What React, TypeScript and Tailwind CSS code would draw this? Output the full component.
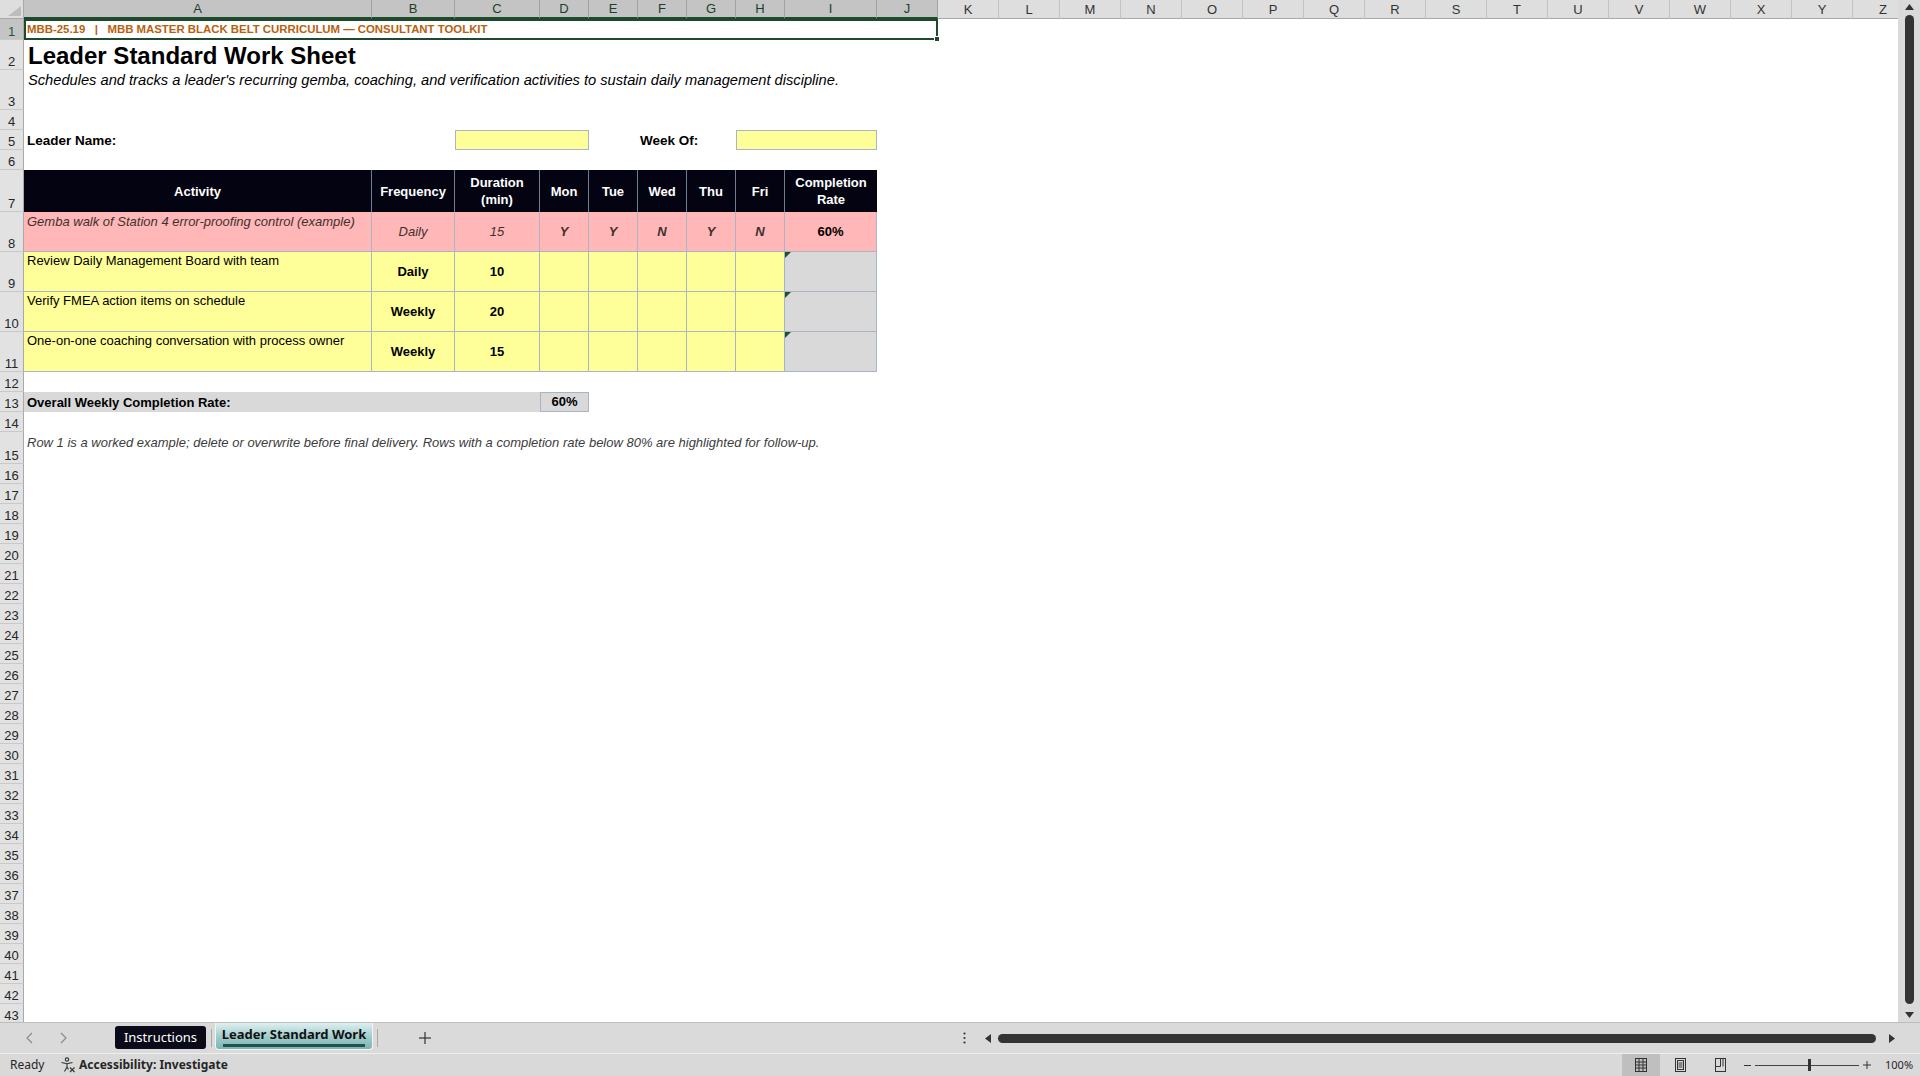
import React from 'react';

type Col = { l: string; w: string; sel: boolean };
const COLS: Col[] = [
  { l: 'A', w: 'w-[348px]', sel: true },
  { l: 'B', w: 'w-[83px]', sel: true },
  { l: 'C', w: 'w-[85px]', sel: true },
  { l: 'D', w: 'w-[49px]', sel: true },
  { l: 'E', w: 'w-[49px]', sel: true },
  { l: 'F', w: 'w-[49px]', sel: true },
  { l: 'G', w: 'w-[49px]', sel: true },
  { l: 'H', w: 'w-[49px]', sel: true },
  { l: 'I', w: 'w-[92px]', sel: true },
  { l: 'J', w: 'w-[61px]', sel: true },
  ...'KLMNOPQRSTUVWXYZ'.split('').map((l) => ({ l, w: 'w-[61px]', sel: false })),
];

function ColumnHeader() {
  return (
    <div className="flex h-[19px] shrink-0">
      <div className="relative w-[24px] shrink-0 bg-[#dedede] border-r border-b border-[#a9a9a9]">
        <svg className="absolute right-[1px] bottom-[2px]" width="14" height="10" viewBox="0 0 14 10">
          <polygon points="13,0 13,10 0,10" fill="#bdbdbd" />
        </svg>
      </div>
      {COLS.map((c) => (
        <div
          key={c.l}
          className={`${c.w} shrink-0 flex items-center justify-center border-r text-[13px] leading-none ${
            c.sel
              ? 'bg-[#c4c4c4] text-[#1b3f2a] border-[#a3a3a3] border-b-2 border-b-[#1d4a2c]'
              : 'bg-[#dedede] text-[#333333] border-[#c2c2c2] border-b border-b-[#a9a9a9]'
          }`}
        >
          {c.l}
        </div>
      ))}
    </div>
  );
}

function RH({ n, sel }: { n: number; sel?: boolean }) {
  return (
    <div
      className={`w-[24px] shrink-0 self-stretch flex items-end justify-center border-r border-r-[#a9a9a9] border-b border-b-[#c9c9c9] text-[13px] leading-[14px] ${
        sel ? 'bg-[#c4c4c4] text-[#1b5a34]' : 'bg-[#e2e2e2] text-[#262626]'
      }`}
    >
      {n}
    </div>
  );
}

const TB = 'border-r border-b border-[#a9b5c4]';

function HeadCell({ w, children, last }: { w: string; children: React.ReactNode; last?: boolean }) {
  return (
    <div
      className={`${w} shrink-0 flex items-center justify-center text-center text-white font-bold text-[13px] leading-[17px] ${
        last ? '' : 'border-r border-[#6f7d8c]'
      }`}
    >
      {children}
    </div>
  );
}

function Triangle() {
  return <div className="absolute top-0 left-0 w-0 h-0 border-t-[6px] border-r-[6px] border-t-[#1e5128] border-r-transparent" />;
}

function DataRow({ act, freq, dur }: { act: string; freq: string; dur: string }) {
  return (
    <div className="flex w-fit h-full bg-[#ffff99] text-[13px] text-black">
      <div className={`w-[348px] shrink-0 ${TB} pl-[3px] pt-[1px] leading-[16px] whitespace-nowrap`}>{act}</div>
      <div className={`w-[83px] shrink-0 ${TB} flex items-center justify-center font-bold`}>{freq}</div>
      <div className={`w-[85px] shrink-0 ${TB} flex items-center justify-center font-bold`}>{dur}</div>
      <div className={`w-[49px] shrink-0 ${TB}`} />
      <div className={`w-[49px] shrink-0 ${TB}`} />
      <div className={`w-[49px] shrink-0 ${TB}`} />
      <div className={`w-[49px] shrink-0 ${TB}`} />
      <div className={`w-[49px] shrink-0 ${TB}`} />
      <div className={`relative w-[92px] shrink-0 ${TB} bg-[#d9d9d9]`}>
        <Triangle />
      </div>
    </div>
  );
}

function ExampleRow() {
  const day = 'w-[49px] shrink-0 flex items-center justify-center font-bold italic';
  return (
    <div className="flex w-fit h-full bg-[#ffb7b7] text-[13px] text-[#3f3030] italic">
      <div className={`w-[348px] shrink-0 ${TB} pl-[3px] pt-[2px] leading-[16px] whitespace-nowrap`}>
        Gemba walk of Station 4 error-proofing control (example)
      </div>
      <div className={`w-[83px] shrink-0 ${TB} flex items-center justify-center`}>Daily</div>
      <div className={`w-[85px] shrink-0 ${TB} flex items-center justify-center`}>15</div>
      <div className={`${day} ${TB}`}>Y</div>
      <div className={`${day} ${TB}`}>Y</div>
      <div className={`${day} ${TB}`}>N</div>
      <div className={`${day} ${TB}`}>Y</div>
      <div className={`${day} ${TB}`}>N</div>
      <div className={`w-[92px] shrink-0 ${TB} flex items-center justify-center font-bold not-italic text-black`}>60%</div>
    </div>
  );
}

function rowContent(n: number): React.ReactNode {
  switch (n) {
    case 1:
      return (
        <div className="relative w-[914px] h-full border-2 border-[#1d4a2c] flex items-center pl-[1px]">
          <span className="whitespace-pre text-[11.4px] font-bold text-[#b5620e] leading-none">
            {'MBB-25.19   |   MBB MASTER BLACK BELT CURRICULUM — CONSULTANT TOOLKIT'}
          </span>
          <div className="absolute -right-[4px] -bottom-[4px] w-[6px] h-[6px] bg-[#1d4a2c] border border-white" />
        </div>
      );
    case 2:
      return (
        <div className="h-full flex items-end pl-[4px] text-[24px] font-bold leading-[28px] whitespace-nowrap text-black">
          Leader Standard Work Sheet
        </div>
      );
    case 3:
      return (
        <div className="h-full pl-[4px] pt-[2px] italic text-[14.67px] leading-[17px] whitespace-nowrap text-black">
          Schedules and tracks a leader's recurring gemba, coaching, and verification activities to sustain daily management discipline.
        </div>
      );
    case 5:
      return (
        <div className="flex h-full text-[13.5px] font-bold leading-[16px]">
          <div className="w-[348px] shrink-0 flex items-end pl-[3px] pb-[1px]">Leader Name:</div>
          <div className="w-[83px] shrink-0" />
          <div className="w-[134px] shrink-0 bg-[#ffff99] border border-[#a7b6c6]" />
          <div className="w-[49px] shrink-0" />
          <div className="w-[49px] shrink-0 flex items-end pl-[2px] pb-[1px] whitespace-nowrap">Week Of:</div>
          <div className="w-[49px] shrink-0" />
          <div className="w-[141px] shrink-0 bg-[#ffff99] border border-[#a7b6c6]" />
        </div>
      );
    case 7:
      return (
        <div className="flex w-fit h-full bg-[#030312]">
          <HeadCell w="w-[348px]">Activity</HeadCell>
          <HeadCell w="w-[83px]">Frequency</HeadCell>
          <HeadCell w="w-[85px]">
            <span>
              Duration
              <br />
              (min)
            </span>
          </HeadCell>
          <HeadCell w="w-[49px]">Mon</HeadCell>
          <HeadCell w="w-[49px]">Tue</HeadCell>
          <HeadCell w="w-[49px]">Wed</HeadCell>
          <HeadCell w="w-[49px]">Thu</HeadCell>
          <HeadCell w="w-[49px]">Fri</HeadCell>
          <HeadCell w="w-[92px]" last>
            <span>
              Completion
              <br />
              Rate
            </span>
          </HeadCell>
        </div>
      );
    case 8:
      return <ExampleRow />;
    case 9:
      return <DataRow act="Review Daily Management Board with team" freq="Daily" dur="10" />;
    case 10:
      return <DataRow act="Verify FMEA action items on schedule" freq="Weekly" dur="20" />;
    case 11:
      return <DataRow act="One-on-one coaching conversation with process owner" freq="Weekly" dur="15" />;
    case 13:
      return (
        <div className="flex h-full text-[13px] font-bold leading-[16px]">
          <div className="w-[516px] shrink-0 bg-[#d9d9d9] flex items-end pl-[3px] pb-[1px]">Overall Weekly Completion Rate:</div>
          <div className="w-[49px] shrink-0 bg-[#d9d9d9] border border-[#a9b5c4] flex items-center justify-center">60%</div>
        </div>
      );
    case 15:
      return (
        <div className="h-full pl-[3px] pt-[3px] italic text-[13px] leading-[16px] whitespace-nowrap text-[#3c3c3c]">
          Row 1 is a worked example; delete or overwrite before final delivery. Rows with a completion rate below 80% are highlighted for follow-up.
        </div>
      );
    default:
      return null;
  }
}

const ROWS: { n: number; h: string }[] = [
  { n: 1, h: 'h-[21px]' },
  { n: 2, h: 'h-[30px]' },
  { n: 3, h: 'h-[40px]' },
  { n: 4, h: 'h-[20px]' },
  { n: 5, h: 'h-[20px]' },
  { n: 6, h: 'h-[20px]' },
  { n: 7, h: 'h-[42px]' },
  { n: 8, h: 'h-[40px]' },
  { n: 9, h: 'h-[40px]' },
  { n: 10, h: 'h-[40px]' },
  { n: 11, h: 'h-[40px]' },
  { n: 12, h: 'h-[20px]' },
  { n: 13, h: 'h-[20px]' },
  { n: 14, h: 'h-[20px]' },
  { n: 15, h: 'h-[32px]' },
  ...Array.from({ length: 28 }, (_, i) => ({ n: 16 + i, h: 'h-[20px]' })),
];

function VScroll() {
  return (
    <div className="w-[22px] h-full shrink-0 bg-[#dadada] flex flex-col items-center pt-[4px] pb-[4px]">
      <svg width="9" height="6" viewBox="0 0 9 6">
        <polygon points="4.5,0 9,6 0,6" fill="#333" />
      </svg>
      <div className="mt-[5px] w-[9px] flex-1 rounded-full bg-[#333333]" />
      <svg className="mt-[8px]" width="9" height="6" viewBox="0 0 9 6">
        <polygon points="0,0 9,0 4.5,6" fill="#333" />
      </svg>
    </div>
  );
}

function TabBar() {
  return (
    <div className="h-[31px] shrink-0 flex bg-[#dadada] border-t border-[#bdbdbd] font-['Noto_Sans','Open_Sans',sans-serif]">
      <div className="w-[950px] shrink-0 flex">
        <div className="w-[112px] shrink-0 flex items-center pl-[23px] gap-[19px] text-[#8a8a8a]">
          <svg width="14" height="14" viewBox="0 0 14 14">
            <polyline points="9,2 4,7 9,12" fill="none" stroke="#8a8a8a" strokeWidth="1.2" />
          </svg>
          <svg width="14" height="14" viewBox="0 0 14 14">
            <polyline points="5,2 10,7 5,12" fill="none" stroke="#8a8a8a" strokeWidth="1.2" />
          </svg>
        </div>
        <div className="ml-[3px] mt-[3px] w-[91px] h-[23px] rounded-[3px] bg-[#0a0a18] text-white text-[13px] flex items-center justify-center">
          Instructions
        </div>
        <div className="ml-[5px] mt-[6px] w-px h-[18px] bg-[#a8a8a8]" />
        <div className="ml-[3px] w-[158px] h-[27px] rounded-b-[4px] border border-t-0 border-[#f4f4f4] bg-gradient-to-b from-[#dff0f0] via-[#a3cdcd] to-[#7db3b2] flex flex-col items-center justify-center">
          <span className="text-[13px] font-bold text-[#111] leading-[16px]">Leader Standard Work</span>
          <span className="mt-[2px] w-[142px] h-[3px] bg-[#1f5448]" />
        </div>
        <div className="ml-[4px] mt-[6px] w-px h-[18px] bg-[#a8a8a8]" />
        <div className="ml-[40px] flex items-center">
          <svg width="14" height="14" viewBox="0 0 14 14">
            <line x1="7" y1="1" x2="7" y2="13" stroke="#333" strokeWidth="1.2" />
            <line x1="1" y1="7" x2="13" y2="7" stroke="#333" strokeWidth="1.2" />
          </svg>
        </div>
      </div>
      <div className="w-[28px] shrink-0 flex items-center justify-center">
        <svg width="3" height="12" viewBox="0 0 3 12">
          <circle cx="1.5" cy="1.5" r="1.1" fill="#333" />
          <circle cx="1.5" cy="6" r="1.1" fill="#333" />
          <circle cx="1.5" cy="10.5" r="1.1" fill="#333" />
        </svg>
      </div>
      <div className="w-[20px] shrink-0 flex items-center justify-center">
        <svg width="6" height="9" viewBox="0 0 6 9">
          <polygon points="6,0 6,9 0,4.5" fill="#333" />
        </svg>
      </div>
      <div className="w-[878px] shrink-0 flex items-center">
        <div className="w-full h-[9px] rounded-full bg-[#333333]" />
      </div>
      <div className="w-[32px] shrink-0 flex items-center justify-center">
        <svg width="6" height="9" viewBox="0 0 6 9">
          <polygon points="0,0 6,4.5 0,9" fill="#333" />
        </svg>
      </div>
    </div>
  );
}

function StatusBar() {
  return (
    <div className="h-[23px] shrink-0 flex items-center bg-[#d9d9d9] border-t border-[#efefef] text-[12px] text-[#262626] font-['Noto_Sans','Open_Sans',sans-serif]">
      <span className="pl-[10px] w-[60px] shrink-0">Ready</span>
      <svg width="16" height="16" viewBox="0 0 16 16" className="shrink-0">
        <circle cx="7" cy="2.6" r="1.7" fill="none" stroke="#333" strokeWidth="1.1" />
        <path d="M1.5 5.5 L7 6.8 L12.5 5.5" fill="none" stroke="#333" strokeWidth="1.1" />
        <path d="M7 6.8 L7 10 L4.5 14.5 M7 10 L8.5 12.5" fill="none" stroke="#333" strokeWidth="1.1" />
        <path d="M10 10.5 L14.5 15 M14.5 10.5 L10 15" fill="none" stroke="#333" strokeWidth="1.1" />
      </svg>
      <span className="ml-[3px] font-bold">Accessibility: Investigate</span>
      <div className="ml-auto w-[298px] shrink-0 h-full flex items-center">
        <div className="w-[38px] h-full bg-[#bfbfbf] flex items-center justify-center">
          <svg width="12" height="14" viewBox="0 0 12 14">
            <rect x="0.5" y="0.5" width="11" height="13" fill="none" stroke="#333" />
            <line x1="4" y1="0.5" x2="4" y2="13.5" stroke="#333" />
            <line x1="8" y1="0.5" x2="8" y2="13.5" stroke="#333" />
            <line x1="0.5" y1="4" x2="11.5" y2="4" stroke="#333" />
            <line x1="0.5" y1="7" x2="11.5" y2="7" stroke="#333" />
            <line x1="0.5" y1="10" x2="11.5" y2="10" stroke="#333" />
          </svg>
        </div>
        <div className="w-[41px] h-full flex items-center justify-center">
          <svg width="11" height="14" viewBox="0 0 11 14">
            <rect x="0.5" y="0.5" width="10" height="13" fill="none" stroke="#333" />
            <rect x="2.5" y="2.5" width="6" height="9" fill="none" stroke="#333" />
            <line x1="3.5" y1="5" x2="7.5" y2="5" stroke="#333" />
            <line x1="3.5" y1="7" x2="7.5" y2="7" stroke="#333" />
            <line x1="3.5" y1="9" x2="7.5" y2="9" stroke="#333" />
          </svg>
        </div>
        <div className="w-[38px] h-full flex items-center justify-center">
          <svg width="11" height="14" viewBox="0 0 11 14">
            <rect x="0.5" y="0.5" width="10" height="13" fill="none" stroke="#333" />
            <path d="M0.5 8.5 H5.5 V0.5" fill="none" stroke="#333" />
            <line x1="8" y1="0.5" x2="8" y2="8.5" stroke="#333" />
          </svg>
        </div>
        <div className="w-[16px] flex items-center justify-center">
          <div className="w-[7px] h-px bg-[#333]" />
        </div>
        <div className="relative w-[104px] h-[12px] flex items-center">
          <div className="w-full h-px bg-[#444]" />
          <div className="absolute left-[53px] top-0 w-[3px] h-[12px] bg-[#333]" />
        </div>
        <div className="w-[16px] flex items-center justify-center">
          <svg width="8" height="8" viewBox="0 0 8 8">
            <line x1="4" y1="0" x2="4" y2="8" stroke="#333" />
            <line x1="0" y1="4" x2="8" y2="4" stroke="#333" />
          </svg>
        </div>
        <span className="pl-[10px] text-[11px]">100%</span>
      </div>
    </div>
  );
}

export default function App() {
  return (
    <div className="w-[1920px] h-[1076px] overflow-hidden flex flex-col bg-white font-['Liberation_Sans',Arial,sans-serif] text-black">
      <div className="flex h-[1022px] shrink-0">
        <div className="w-[1898px] h-[1022px] overflow-hidden flex flex-col">
          <ColumnHeader />
          {ROWS.map((r) => (
            <div key={r.n} className={`flex shrink-0 ${r.h}`}>
              <RH n={r.n} sel={r.n === 1} />
              <div className="flex-1 h-full">{rowContent(r.n)}</div>
            </div>
          ))}
        </div>
        <VScroll />
      </div>
      <TabBar />
      <StatusBar />
    </div>
  );
}
